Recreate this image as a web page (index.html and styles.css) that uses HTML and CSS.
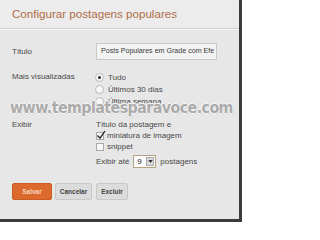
FILE: index.html
```html
<!DOCTYPE html>
<html lang="pt">
<head>
<meta charset="utf-8">
<link rel="stylesheet" href="styles.css">
</head>
<body>
<div class="dialog">
  <div class="header"><h1 class="title">Configurar postagens populares</h1></div>
  <div class="content">
    <div class="row">
      <div class="label label-input">Título</div>
      <div class="field"><div class="textbox">Posts Populares em Grade com Efe</div></div>
    </div>
    <div class="row row-gap">
      <div class="label">Mais visualizadas</div>
      <div class="field">
        <div class="line"><span class="radio checked"></span>Tudo</div>
        <div class="line"><span class="radio"></span>Últimos 30 dias</div>
        <div class="line"><span class="radio"></span>Última semana</div>
      </div>
    </div>
    <div class="row row-gap2">
      <div class="label">Exibir</div>
      <div class="field tight">
        <div class="line">Título da postagem e</div>
        <div class="line"><span class="check checked"><svg viewBox="0 0 10 10" width="10" height="10"><path d="M1.5 5.5 L4 8.2 L9 1" fill="none" stroke="#222" stroke-width="1.3"/></svg></span>miniatura de imagem</div>
        <div class="line"><span class="check"></span>snippet</div>
        <div class="line select-line">Exibir até <span class="select"><span class="select-val">9</span><span class="select-btn"><svg viewBox="0 0 6 4" width="5" height="3"><path d="M0 0 H6 L3 4 Z" fill="#333"/></svg></span></span> postagens</div>
      </div>
    </div>
  </div>
  <div class="buttons">
    <span class="btn btn-primary">Salvar</span>
    <span class="btn">Cancelar</span>
    <span class="btn">Excluir</span>
  </div>
  <div class="watermark">www.templatesparavoce.com</div>
</div>
</body>
</html>
```

FILE: styles.css
```css
html, body {
  margin: 0;
  padding: 0;
  background: #ffffff;
}
body {
  width: 244px;
  height: 223px;
  overflow: hidden;
  font-family: "Liberation Sans", Arial, sans-serif;
}
.dialog {
  position: relative;
  width: 239px;
  height: 219px;
  background: #e7e7e7;
  border-right: 3px solid #3c3c3c;
  border-bottom: 3px solid #3c3c3c;
  overflow: hidden;
}
.header {
  height: 29px;
  box-sizing: border-box;
  background: #ececec;
  border-bottom: 1px solid #cfcfcf;
  box-shadow: 0 1px 0 #f6f6f6;
  padding: 5px 0 0 12px;
}
.title {
  margin: 0;
  font-weight: normal;
  font-size: 11.6px;
  line-height: 17px;
  color: #b06d48;
  white-space: nowrap;
}
.content {
  padding: 14px 0 0 12px;
  font-size: 8px;
  color: #474747;
}
.row {
  display: grid;
  grid-template-columns: 84px 1fr;
}
.row-gap { margin-top: 11px; }
.row-gap2 { margin-top: 12px; }
.label {
  line-height: 12px;
  white-space: nowrap;
}
.label-input { line-height: 17px; }
.textbox {
  width: 121px;
  height: 17px;
  box-sizing: border-box;
  border: 1px solid #c9c9c9;
  background: #f3f3f3;
  font-size: 7.1px;
  line-height: 15px;
  padding-left: 4px;
  white-space: nowrap;
  overflow: hidden;
  color: #3a3a3a;
}
.line {
  display: flex;
  align-items: center;
  height: 12px;
  white-space: nowrap;
}
.tight .line { height: 11px; }
.radio {
  width: 7px;
  height: 7px;
  border: 1px solid #b9b9b9;
  border-radius: 50%;
  background: #f7f7f7;
  margin: 0 4px 0 -1px;
  position: relative;
  flex: none;
}
.radio.checked::after {
  content: "";
  position: absolute;
  left: 2px;
  top: 2px;
  width: 3px;
  height: 3px;
  border-radius: 50%;
  background: #222;
}
.check {
  width: 6px;
  height: 6px;
  border: 1px solid #a9a9a9;
  background: #f8f8f8;
  margin-right: 3px;
  position: relative;
  flex: none;
}
.check svg {
  position: absolute;
  left: -1px;
  top: -3px;
}
.tight .select-line {
  height: 13px;
  margin-top: 3px;
}
.select {
  display: inline-flex;
  align-items: center;
  width: 23px;
  height: 13px;
  box-sizing: border-box;
  border: 1px solid #b3a27e;
  background: #fbfbfb;
  margin: 0 4px 0 4px;
  padding: 0 1px 0 3px;
}
.select-val {
  flex: 1;
  color: #222;
}
.select-btn {
  width: 8px;
  height: 9px;
  box-sizing: border-box;
  border: 1px solid #aaa;
  background: #d9d9d9;
  display: flex;
  align-items: center;
  justify-content: center;
}
.buttons {
  display: flex;
  gap: 3px;
  padding: 15px 0 0 12px;
}
.btn {
  height: 17px;
  box-sizing: border-box;
  border: 1px solid #c8c8c8;
  border-radius: 2px;
  background: #dcdcdc;
  color: #444;
  font-size: 6.5px;
  font-weight: bold;
  display: flex;
  align-items: center;
  justify-content: center;
  width: 37px;
}
.btn + .btn + .btn { width: 32px; margin-left: 1px; }
.btn-primary {
  width: 40px;
  background: #dc6a2d;
  border-color: #c95c22;
  color: #f7d6c0;
}
.watermark {
  position: absolute;
  left: 10px;
  top: 100px;
  font-family: "DejaVu Sans", sans-serif;
  font-weight: bold;
  font-size: 15px;
  line-height: 16px;
  letter-spacing: -0.6px;
  color: #ababab;
  white-space: nowrap;
  transform-origin: 0 0;
  transform: scaleX(0.95);
  text-shadow: 1px 0 #f5f5f5, -1px 0 #f5f5f5, 0 1px #f5f5f5, 0 -1px #f5f5f5, 1px 1px #c9c9c9, -1px -1px #e0e0e0, 1px -1px #e0e0e0, -1px 1px #e0e0e0;
}
```
